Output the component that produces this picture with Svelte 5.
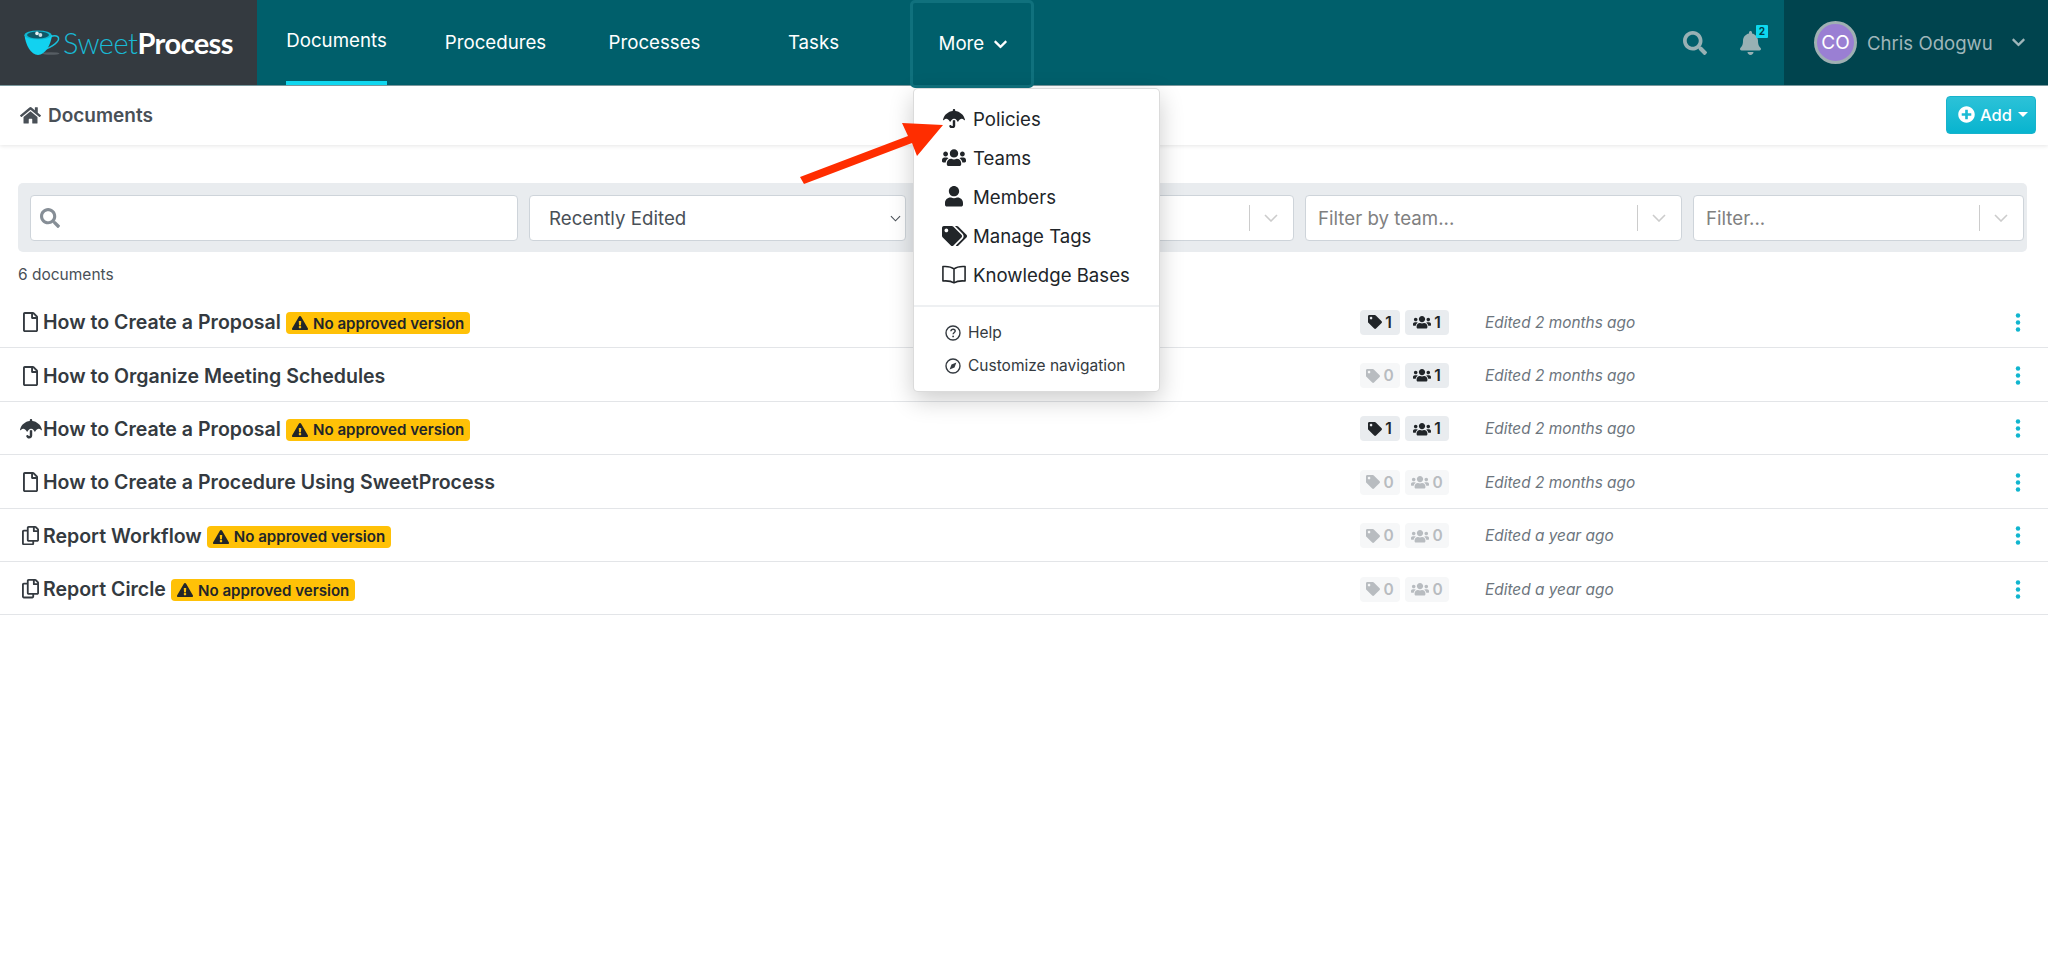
<script>
  const P = {
    search: [512, "M505 442.7L405.3 343c-4.5-4.5-10.6-7-17-7H372c27.6-35.3 44-79.7 44-128C416 93.1 322.9 0 208 0S0 93.1 0 208s93.1 208 208 208c48.3 0 92.7-16.4 128-44v16.3c0 6.4 2.5 12.5 7 17l99.7 99.7c9.4 9.4 24.6 9.4 33.9 0l28.3-28.3c9.4-9.4 9.4-24.6.1-34zM208 336c-70.7 0-128-57.2-128-128 0-70.7 57.2-128 128-128 70.7 0 128 57.2 128 128 0 70.7-57.2 128-128 128z"],
    bell: [448, "M224 512c35.32 0 63.97-28.65 63.97-64H160.03c0 35.35 28.65 64 63.97 64zm215.39-149.71c-19.32-20.76-55.47-51.99-55.47-154.29 0-77.7-54.48-139.9-127.94-155.16V32c0-17.67-14.32-32-31.98-32s-31.98 14.33-31.98 32v20.84C118.56 68.1 64.08 130.3 64.08 208c0 102.3-36.15 133.53-55.47 154.29-6 6.45-8.66 14.16-8.61 21.71.11 16.4 12.98 32 32.1 32h383.8c19.12 0 32-15.6 32.1-32 .05-7.55-2.61-15.27-8.61-21.71z"],
    home: [576, "M280.37 148.26L96 300.11V464a16 16 0 0 0 16 16l112.06-.29a16 16 0 0 0 15.92-16V368a16 16 0 0 1 16-16h64a16 16 0 0 1 16 16v95.64a16 16 0 0 0 16 16.05L464 480a16 16 0 0 0 16-16V300L295.67 148.26a12.19 12.19 0 0 0-15.3 0zM571.6 251.47L488 182.56V44.05a12 12 0 0 0-12-12h-56a12 12 0 0 0-12 12v72.61L318.47 43a48 48 0 0 0-61 0L4.34 251.47a12 12 0 0 0-1.6 16.9l25.5 31A12 12 0 0 0 45.15 301l235.22-193.74a12.19 12.19 0 0 1 15.3 0L530.9 301a12 12 0 0 0 16.9-1.6l25.5-31a12 12 0 0 0-1.7-16.93z"],
    users: [640, "M96 224c35.3 0 64-28.7 64-64s-28.7-64-64-64-64 28.7-64 64 28.7 64 64 64zm448 0c35.3 0 64-28.7 64-64s-28.7-64-64-64-64 28.7-64 64 28.7 64 64 64zm32 32h-64c-17.6 0-33.5 7.1-45.1 18.6 40.3 22.1 68.9 62 75.1 109.4h66c17.7 0 32-14.3 32-32v-32c0-35.3-28.7-64-64-64zm-256 0c61.9 0 112-50.1 112-112S381.9 32 320 32 208 82.1 208 144s50.1 112 112 112zm76.8 32h-8.3c-20.8 10-43.9 16-68.5 16s-47.6-6-68.5-16h-8.3C179.6 288 128 339.6 128 403.2V432c0 26.5 21.5 48 48 48h288c26.5 0 48-21.5 48-48v-28.8c0-63.6-51.6-115.2-115.2-115.2zm-223.7-13.4C161.5 263.1 145.6 256 128 256H64c-35.3 0-64 28.7-64 64v32c0 17.7 14.3 32 32 32h65.9c6.3-47.4 34.9-87.3 75.2-109.4z"],
    user: [448, "M224 256c70.7 0 128-57.3 128-128S294.7 0 224 0 96 57.3 96 128s57.3 128 128 128zm89.6 32h-16.7c-22.2 10.2-46.9 16-72.9 16s-50.6-5.8-72.9-16h-16.7C60.2 288 0 348.2 0 422.4V464c0 26.5 21.5 48 48 48h352c26.5 0 48-21.5 48-48v-41.6c0-74.2-60.2-134.4-134.4-134.4z"],
    tags: [640, "M497.941 225.941L286.059 14.059A48 48 0 0 0 252.118 0H48C21.49 0 0 21.49 0 48v204.118a48 48 0 0 0 14.059 33.941l211.882 211.882c18.744 18.745 49.136 18.746 67.882 0l204.118-204.118c18.745-18.745 18.745-49.137 0-67.882zM112 160c-26.51 0-48-21.49-48-48s21.49-48 48-48 48 21.49 48 48-21.49 48-48 48zm513.941 133.823L421.823 497.941c-18.745 18.745-49.137 18.745-67.882 0l-.36-.36L527.64 323.522c16.999-16.999 26.36-39.6 26.36-63.64s-9.362-46.641-26.36-63.64L331.397 0h48.721a48 48 0 0 1 33.941 14.059l211.882 211.882c18.745 18.745 18.745 49.137 0 67.882z"],
    tag: [512, "M0 252.118V48C0 21.49 21.49 0 48 0h204.118a48 48 0 0 1 33.941 14.059l211.882 211.882c18.745 18.745 18.745 49.137 0 67.882L293.823 497.941c-18.745 18.745-49.137 18.745-67.882 0L14.059 286.059A48 48 0 0 1 0 252.118zM112 64c-26.51 0-48 21.49-48 48s21.49 48 48 48 48-21.49 48-48-21.49-48-48-48z"],
    umbrella: [576, "M575.7 280.8C547.1 144.5 437.3 62.6 320 49.9V32c0-17.7-14.3-32-32-32s-32 14.3-32 32v17.9C138.3 62.6 29.5 144.5.3 280.8c-2.2 10.1 8.5 21.3 18.7 11.4 52-55 107.7-52.4 158.6 37 5.3 9.5 14.9 8.6 19.7 0 20.2-35.4 44.9-73.2 90.7-73.2 58.5 0 83.3 56.5 90.7 73.2 4.8 8.6 14.4 9.5 19.7 0 51-89.5 107.1-91.4 158.6-37 10.3 10 20.9-1.3 18.7-11.4zM256 301.7V432c0 8.8-7.2 16-16 16-7.8 0-13.2-5.3-15.1-10.7-5.9-16.7-24.1-25.4-40.8-19.5-16.7 5.9-25.4 24.2-19.5 40.8 11.2 31.9 41.6 53.3 75.4 53.3 44.1 0 80-35.9 80-80V301.6c-9.1-7.9-19.8-13.6-32-13.6-12.3 0-23 5.8-32 13.7z"],
    file: [384, "M369.9 97.9L286 14C277 5 264.8-.1 252.1-.1H48C21.5 0 0 21.5 0 48v416c0 26.5 21.5 48 48 48h288c26.5 0 48-21.5 48-48V131.9c0-12.7-5.1-25-14.1-34zM332.1 128H256V51.9l76.1 76.1zM48 464V48h160v104c0 13.3 10.7 24 24 24h104v288H48z"],
    copy: [448, "M433.941 65.941l-51.882-51.882A48 48 0 0 0 348.118 0H176c-26.51 0-48 21.49-48 48v48H48c-26.51 0-48 21.49-48 48v320c0 26.51 21.49 48 48 48h224c26.51 0 48-21.49 48-48v-48h80c26.51 0 48-21.49 48-48V99.882a48 48 0 0 0-14.059-33.941zM266 464H54a6 6 0 0 1-6-6V150a6 6 0 0 1 6-6h74v224c0 26.51 21.49 48 48 48h96v42a6 6 0 0 1-6 6zm128-96H182a6 6 0 0 1-6-6V54a6 6 0 0 1 6-6h106v88c0 13.255 10.745 24 24 24h88v202a6 6 0 0 1-6 6zm6-256h-64V48h9.632c1.591 0 3.117.632 4.243 1.757l48.368 48.368a6 6 0 0 1 1.757 4.243V112z"],
    warn: [576, "M569.517 440.013C587.975 472.007 564.806 512 527.94 512H48.054c-36.937 0-59.999-40.055-41.577-71.987L246.423 24.035c18.467-32.009 64.72-31.951 83.154 0l239.94 416.464zM288 354c-25.405 0-46 20.595-46 46s20.595 46 46 46 46-20.595 46-46-20.595-46-46-46zm-43.673-165.346l7.418 136c.347 6.364 5.609 11.346 11.982 11.346h48.546c6.373 0 11.635-4.982 11.982-11.346l7.418-136c.375-6.874-5.098-12.654-11.982-12.654h-63.383c-6.884 0-12.356 5.78-11.981 12.654z"],
    plus: [512, "M256 8C119 8 8 119 8 256s111 248 248 248 248-111 248-248S393 8 256 8zm144 276c0 6.6-5.4 12-12 12h-92v92c0 6.6-5.4 12-12 12h-56c-6.6 0-12-5.4-12-12v-92h-92c-6.6 0-12-5.4-12-12v-56c0-6.6 5.4-12 12-12h92v-92c0-6.6 5.4-12 12-12h56c6.6 0 12 5.4 12 12v92h92c6.6 0 12 5.4 12 12v56z"],
    chev: [448, "M207.029 381.476L12.686 187.132c-9.373-9.373-9.373-24.569 0-33.941l22.667-22.667c9.357-9.357 24.522-9.375 33.901-.04L224 284.505l154.745-154.021c9.379-9.335 24.544-9.317 33.901.04l22.667 22.667c9.373 9.373 9.373 24.569 0 33.941L240.971 381.476c-9.373 9.372-24.569 9.372-33.942 0z"]
  };
  const nav = [
    { label: "Documents", active: true },
    { label: "Procedures" },
    { label: "Processes" },
    { label: "Tasks" }
  ];
  const menu = [
    { icon: "umbrella", label: "Policies", w: 22 },
    { icon: "users", label: "Teams", w: 24 },
    { icon: "user", label: "Members", w: 18 },
    { icon: "tags", label: "Manage Tags", w: 25 }
  ];
  const rows = [
    { icon: "file", title: "How to Create a Proposal", warn: true, tags: 1, teams: 1, edited: "Edited 2 months ago" },
    { icon: "file", title: "How to Organize Meeting Schedules", warn: false, tags: 0, teams: 1, edited: "Edited 2 months ago" },
    { icon: "umbrella", title: "How to Create a Proposal", warn: true, tags: 1, teams: 1, edited: "Edited 2 months ago" },
    { icon: "file", title: "How to Create a Procedure Using SweetProcess", warn: false, tags: 0, teams: 0, edited: "Edited 2 months ago" },
    { icon: "copy", title: "Report Workflow", warn: true, tags: 0, teams: 0, edited: "Edited a year ago" },
    { icon: "copy", title: "Report Circle", warn: true, tags: 0, teams: 0, edited: "Edited a year ago" }
  ];
  const iconW = { file: 15, umbrella: 22, copy: 17 };
</script>

{#snippet fa(name, w, cls = "")}
  <svg class={"fa " + cls} style={"width:" + w + "px"} viewBox={"0 0 " + P[name][0] + " 512"} aria-hidden="true"><path fill="currentColor" d={P[name][1]} /></svg>
{/snippet}

{#snippet selectChev()}
  <span class="sep"></span>
  <svg class="schev" viewBox="0 0 14 8" aria-hidden="true"><polyline points="1,1 7,7 13,1" fill="none" stroke="#cccccc" stroke-width="1.6" /></svg>
{/snippet}

<div class="page">
  <header class="top">
    <div class="brand">
      <svg class="cup" viewBox="0 0 36 26" aria-hidden="true">
        <ellipse cx="27" cy="23.5" rx="8.5" ry="1.3" fill="#565d63" />
        <path d="M26 7 C33 3.5 37 8 33 12 C30.5 15 27 17 22 19" fill="none" stroke="#19c0dc" stroke-width="1.5" />
        <path d="M0.5 5 C1.5 15 7 25 14 25 C21 25 27 15 28 5 Z" fill="#12d2f0" />
        <ellipse cx="14" cy="5" rx="13.5" ry="4.6" fill="#10b8d2" />
        <ellipse cx="14" cy="5" rx="11" ry="3.5" fill="#115766" />
        <circle cx="13" cy="3.4" r="1.8" fill="#e8f2f4" /><circle cx="16.4" cy="5" r="1.9" fill="#c9dde1" />
      </svg>
      <span class="logo"><span class="sw">Sweet</span><span class="pr">Process</span></span>
    </div>
    <nav class="nav">
      {#each nav as item}
        <a class="nav-item" class:active={item.active}><span>{item.label}</span></a>
      {/each}
      <div class="nav-item more">
        <span class="more-box">More {@render fa("chev", 13, "more-chev")}</span>
        <div class="dropdown">
          {#each menu as m}
            <div class="mi"><span class="mi-ic">{@render fa(m.icon, m.w)}</span>{m.label}</div>
          {/each}
          <div class="mi">
            <span class="mi-ic">
              <svg class="book" viewBox="0 0 26 20" aria-hidden="true"><path d="M13 4 C10 1.6 6 1 1 1.4 V17 C6 16.6 10 17 13 19 C16 17 20 16.6 25 17 V1.4 C20 1 16 1.6 13 4 Z M13 4 V19" fill="none" stroke="currentColor" stroke-width="1.7" stroke-linejoin="round" /></svg>
            </span>Knowledge Bases
          </div>
          <div class="divider"></div>
          <div class="ms">
            <svg class="sm" viewBox="0 0 16 16" aria-hidden="true"><circle cx="8" cy="8" r="7" fill="none" stroke="currentColor" stroke-width="1.4" /><path d="M5.9 6.2 C6 4.8 7 4.2 8.1 4.2 C9.3 4.2 10.2 5 10.2 6 C10.2 7.4 8.1 7.5 8.1 9.2" fill="none" stroke="currentColor" stroke-width="1.4" /><circle cx="8.1" cy="11.4" r=".9" fill="currentColor" /></svg>
            Help
          </div>
          <div class="ms">
            <svg class="sm" viewBox="0 0 16 16" aria-hidden="true"><circle cx="8" cy="8" r="7" fill="none" stroke="currentColor" stroke-width="1.4" /><path d="M11.4 4.6 L9.5 9.5 L4.6 11.4 L6.5 6.5 Z" fill="currentColor" /></svg>
            Customize navigation
          </div>
        </div>
      </div>
    </nav>
    <div class="tools">
      <span class="tool">{@render fa("search", 24)}</span>
      <span class="tool bell">{@render fa("bell", 21)}<span class="nbadge">2</span></span>
    </div>
    <div class="usr">
      <span class="avatar">CO</span>
      <span class="uname">Chris Odogwu</span>
      {@render fa("chev", 13, "uchev")}
    </div>
  </header>

  <div class="sub">
    <div class="crumb">{@render fa("home", 21)}<span>Documents</span></div>
    <button class="add">{@render fa("plus", 17)}<span>Add</span><i class="caret"></i></button>
  </div>

  <main>
    <div class="filters">
      <div class="field search">{@render fa("search", 20)}</div>
      <div class="field native"><span>Recently Edited</span><svg class="nchev" viewBox="0 0 12 7" aria-hidden="true"><polyline points="1,1 6,6 11,1" fill="none" stroke="#495057" stroke-width="1.2" /></svg></div>
      <div class="field rs"><span></span>{@render selectChev()}</div>
      <div class="field rs"><span>Filter by team...</span>{@render selectChev()}</div>
      <div class="field rs"><span>Filter...</span>{@render selectChev()}</div>
    </div>
    <div class="count">6 documents</div>
    <div class="list">
      {#each rows as r}
        <div class="row">
          <span class="ric">{@render fa(r.icon, iconW[r.icon])}</span>
          <span class="title">{r.title}</span>
          {#if r.warn}
            <span class="warnb">{@render fa("warn", 16)}No approved version</span>
          {/if}
          <span class="grow"></span>
          <span class="chip c1" class:off={r.tags === 0}>{@render fa("tag", 14)}{r.tags}</span>
          <span class="chip c2" class:off={r.teams === 0}>{@render fa("users", 18)}{r.teams}</span>
          <span class="edited">{r.edited}</span>
          <svg class="kebab" viewBox="0 0 6 22" aria-hidden="true"><circle cx="3" cy="3" r="2.6" /><circle cx="3" cy="11" r="2.6" /><circle cx="3" cy="19" r="2.6" /></svg>
        </div>
      {/each}
    </div>
  </main>

  <svg class="arrow" viewBox="0 0 143 62" aria-hidden="true">
    <polygon points="0,55 108,14 102,1 143,3 117,34 112,21 4,62" fill="#ff2d00" />
  </svg>
</div>

<style>
  :global(body) { margin: 0; background: #fff; font-family: Inter, "Noto Sans", sans-serif; color: #212529; }
  .page { position: relative; height: 953px; overflow: hidden; }
  .fa { display: block; height: auto; flex: none; }

  .top { display: flex; height: 85px; background: #005f6b; border-bottom: 1px solid #7d9ca1; }
  .brand { width: 257px; display: flex; align-items: center; padding-left: 24px; gap: 3px; box-sizing: border-box; background: #343a40; flex: none; }
  .cup { width: 36px; height: 26px; flex: none; }
  .logo { font-family: Lato, sans-serif; font-size: 29px; letter-spacing: -0.55px; line-height: 1; }
  .sw { color: #19b9d4; font-weight: 300; }
  .pr { color: #fff; font-weight: 700; }

  .nav { display: flex; flex: 1; }
  .nav-item { width: 159px; display: flex; justify-content: center; align-items: center; color: #fff; font-size: 18.7px; flex: none; position: relative; }
  .nav-item > span { height: 85px; line-height: 86px; box-sizing: border-box; }
  .nav-item.active > span { line-height: 82px; border-bottom: 4px solid #0fd7ef; }
  .more-box { width: 124px !important; height: 88px !important; line-height: normal !important; margin: 0 2px 3px 0; border: 3px solid #10717d; border-radius: 5px; box-sizing: border-box; display: flex; align-items: center; justify-content: flex-start; padding: 0 0 1px 26px; gap: 10px; }
  .more-chev { margin-top: 1px; }
  .nav-item.more { align-items: flex-start; }
  .dropdown { position: absolute; left: 20px; top: 88px; width: 247px; height: 304px; box-sizing: border-box; background: #fff; border: 1px solid rgba(0,0,0,.14); border-radius: 5px; box-shadow: 0 8px 24px rgba(0,0,0,.2); color: #212529; padding-top: 10px; z-index: 5; }
  .mi { display: flex; align-items: center; height: 39px; font-size: 18.6px; padding-left: 27px; gap: 6px; }
  .mi-ic { width: 26px; display: flex; justify-content: center; flex: none; }
  .book { width: 24px; height: 19px; display: block; }
  .divider { height: 2px; background: #eef0f2; margin: 11px 0 9px; }
  .ms { display: flex; align-items: center; gap: 7px; height: 33px; font-size: 15.5px; padding-left: 31px; color: #343a40; }
  .sm { width: 16px; height: 16px; flex: none; }

  .tools { display: flex; align-items: center; gap: 33px; padding-right: 23px; color: #98b1b4; }
  .tool { display: block; position: relative; }
  .nbadge { position: absolute; left: 16px; top: -6px; width: 12px; height: 13px; background: #0dd8ef; color: #003f48; font-size: 10px; font-weight: 700; text-align: center; line-height: 13px; border-radius: 1px; }
  .usr { width: 264px; flex: none; box-sizing: border-box; background: #00444e; display: flex; align-items: center; padding-left: 30px; color: #9fb6ba; }
  .avatar { width: 43px; height: 43px; box-sizing: border-box; border: 3px solid #9fb0b3; border-radius: 50%; background: #9a7fd3; color: #fff; font-size: 19px; display: flex; align-items: center; justify-content: center; flex: none; }
  .uname { font-size: 18.6px; margin-left: 10px; }
  :global(.uchev) { margin-left: 19px; }

  .sub { height: 59px; display: flex; align-items: center; justify-content: space-between; padding: 0 12px 0 20px; box-sizing: border-box; box-shadow: 0 1px 4px rgba(0,0,0,.1); }
  .crumb { display: flex; align-items: center; gap: 7px; font-size: 19px; font-weight: 600; color: #495057; }
  .add { display: flex; align-items: center; width: 90px; height: 38px; margin-bottom: 2px; padding: 0 0 0 11px; box-sizing: border-box; gap: 5px; border: 1px solid #17b3cc; border-radius: 4px; background: linear-gradient(#2cc2d8, #08b4cf); color: #fff; font: 500 16.5px Inter, sans-serif; }
  .caret { border: 5px solid transparent; border-top-color: #fff; border-bottom: 0; margin-left: 1px; width: 0; height: 0; }

  main { padding-top: 38px; }
  .filters { margin-left: 18px; width: 2009px; height: 69px; box-sizing: border-box; background: #e9ecef; border-radius: 5px; padding: 12px 3px 11px 12px; display: grid; grid-template-columns: 488px 377px 377px 377px 331px; gap: 11px; }
  .field { height: 46px; box-sizing: border-box; background: #fff; border: 1px solid #ced4da; border-radius: 4px; display: flex; align-items: center; font-size: 18.7px; }
  .search { padding-left: 9px; color: #868e96; }
  .native { padding: 0 4px 0 19px; color: #495057; justify-content: space-between; }
  .nchev { width: 11px; height: 7px; margin-right: 0; }
  .rs { padding-left: 12px; color: #808080; }
  .rs > span:first-child { flex: 1; }
  .sep { width: 1px; height: 26px; background: #cccccc; }
  .schev { width: 14px; height: 8px; margin: 0 15px 0 14px; }

  .count { margin: 14px 0 0 18px; font-size: 15.5px; color: #495057; line-height: 18px; height: 29px; }
  .row { height: 53.4px; box-sizing: border-box; border-bottom: 1.6px solid #e3e5e8; display: flex; align-items: center; padding-top: 2px; }
  .ric { width: 23px; margin-left: 19px; margin-right: 1px; display: flex; justify-content: center; color: #343a40; flex: none; }
  .title { font-size: 19.55px; font-weight: 600; color: #343a40; }
  .warnb { display: flex; align-items: center; gap: 5px; height: 22px; margin: 2px 0 0 5px; padding: 0 6px; background: #ffc107; border-radius: 4px; color: #212529; font-size: 15.1px; font-weight: 600; }
  .grow { flex: 1; }
  .chip { display: flex; align-items: center; justify-content: center; box-sizing: border-box; gap: 3px; height: 25px; margin-left: 5px; background: #e9ecef; border-radius: 4px; color: #212529; font-size: 15.5px; font-weight: 600; }
  .c1 { width: 40px; }
  .c2 { width: 44px; }
  .chip.off { background: #f6f7f8; color: #b8bcc0; }
  .edited { width: 566px; padding-left: 36px; box-sizing: border-box; flex: none; font-size: 15.4px; font-style: italic; color: #6c757d; }
  .kebab { width: 6px; height: 19px; fill: #10b5cf; margin-right: 27px; flex: none; }

  .arrow { position: absolute; left: 800px; top: 122px; width: 143px; height: 62px; z-index: 10; }
</style>
